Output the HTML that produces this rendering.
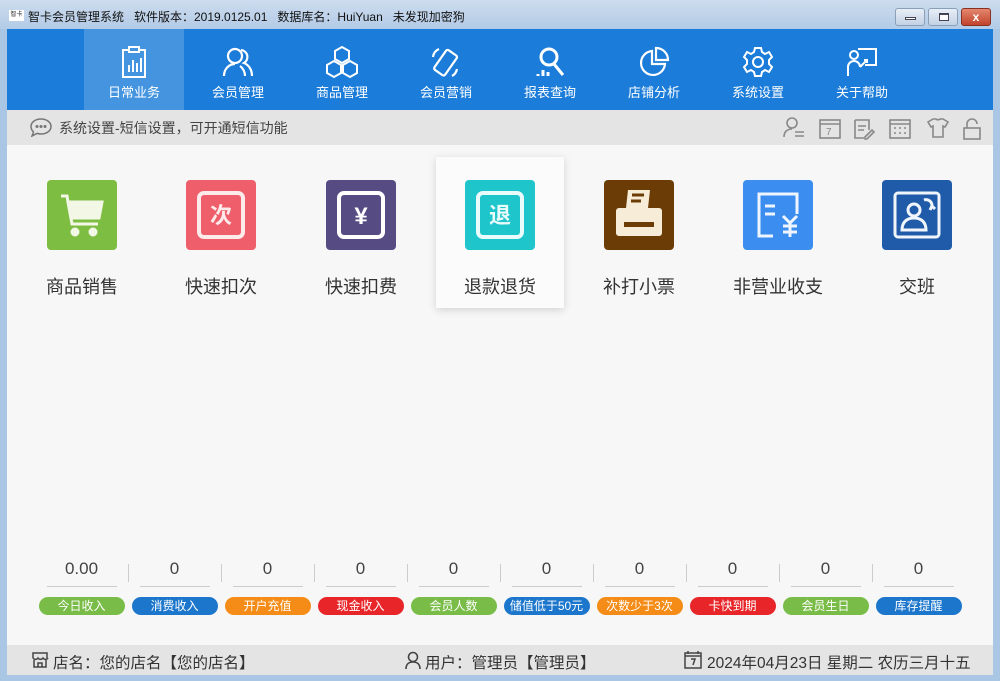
<!DOCTYPE html>
<html><head><meta charset="utf-8"><style>
*{margin:0;padding:0;box-sizing:border-box}
body{width:1000px;height:681px;overflow:hidden;background:#a9c6e4;font-family:"Liberation Sans","Noto Sans CJK SC",sans-serif;position:relative}
.title{position:absolute;left:0;top:0;width:1000px;height:29px;background:linear-gradient(#cddcee,#b3cbe6)}
.title .t{position:absolute;left:28px;top:8px;font-size:12px;color:#111;white-space:pre}
.logo{position:absolute;left:9px;top:10px;width:15px;height:11px;background:#fff;font-size:6px;line-height:11px;text-align:center;color:#333}
.wb{position:absolute;top:8px;height:18px;border:1px solid #8a9fb8;border-radius:3px;background:linear-gradient(#e8eef6,#c3d2e4)}
.nav{position:absolute;left:7px;top:29px;width:986px;height:81px;background:#1b7cd9}
.ni{position:absolute;top:0;width:100px;height:81px;color:#fff;text-align:center;font-size:13px}
.ni svg{position:absolute;left:33px;top:16px}
.ni span{position:absolute;left:0;width:100px;top:53px}
.gbar{position:absolute;left:7px;top:110px;width:986px;height:35px;background:#e4e4e4}
.main{position:absolute;left:7px;top:145px;width:986px;height:500px;background:#f7f7f7}
.tile{position:absolute;top:0;width:128px;text-align:center}
.tile .ic{position:absolute;left:29px;top:35px;width:70px;height:70px;border-radius:4px}
.tile span{position:absolute;left:0;width:128px;top:128px;font-size:18px;color:#333}
.card{position:absolute;left:429px;top:12px;width:128px;height:151px;background:#fbfbfb;box-shadow:0 2px 8px rgba(0,0,0,.15)}
.st{position:absolute;top:413px;width:93px;text-align:center}
.st .v{font-size:17px;color:#444;height:22px;line-height:22px}
.st .ln{margin:6px auto 0;width:70px;border-top:1px solid #ccc}
.st .p{margin:10px auto 0;width:86px;height:18px;border-radius:9px;color:#fff;font-size:12px;line-height:18px}
.sep{position:absolute;top:419px;width:1px;height:18px;background:#ccc}
.sbar{position:absolute;left:7px;top:645px;width:986px;height:30px;background:#e4e4e4;font-size:15.5px;color:#333}
.sbar div{position:absolute;top:6px;white-space:nowrap}
</style></head><body>
<div class="title"><div class="logo">智卡</div><div class="t">智卡会员管理系统   软件版本：2019.0125.01   数据库名：HuiYuan   未发现加密狗</div>
<div class="wb" style="left:895px;width:30px"><div style="position:absolute;left:9px;top:8px;width:11px;height:3px;border:1px solid #445;background:#fff"></div></div>
<div class="wb" style="left:928px;width:30px"><div style="position:absolute;left:10px;top:4px;width:10px;height:8px;border:1px solid #445;border-top-width:2px;background:#fff"></div></div>
<div class="wb" style="left:961px;width:30px;background:linear-gradient(#e5876f,#c0442b);border-color:#8a3020;color:#fff;font-size:12px;text-align:center;line-height:16px;font-weight:bold">x</div>
</div>
<div class="nav">
<div class="ni" style="left:77px;background:#4594e0"><svg width="34" height="34" viewBox="0 0 34 34" fill="none" stroke="#fff" stroke-width="2"><rect x="6" y="5" width="22" height="27"/><rect x="12" y="2" width="10" height="5" fill="#4594e0"/><path d="M12 27V20M16 27V15M20 27V18M24 27V13"/></svg><span>日常业务</span></div>
<div class="ni" style="left:181px"><svg width="34" height="34" viewBox="0 0 34 34" fill="none" stroke="#fff" stroke-width="2.2"><circle cx="14" cy="11" r="7"/><path d="M3 31c0-7 5-12 11-12"/><path d="M20 5a7 7 0 0 1 3 13c5 2 8 7 8 13"/><path d="M24 31c0-4-2-8-5-10"/></svg><span>会员管理</span></div>
<div class="ni" style="left:285px"><svg width="34" height="34" viewBox="0 0 34 34" fill="none" stroke="#fff" stroke-width="2"><path d="M17 2l7 4v8l-7 4-7-4V6z"/><path d="M9 16l7 4v8l-7 4-7-4v-8z"/><path d="M25 16l7 4v8l-7 4-7-4v-8z"/></svg><span>商品管理</span></div>
<div class="ni" style="left:389px"><svg width="34" height="34" viewBox="0 0 34 34" fill="none" stroke="#fff" stroke-width="2.2"><rect x="10" y="6" width="13" height="24" rx="2" transform="rotate(35 17 18)"/><path d="M4 12a10 10 0 0 1 6-8M28 24a10 10 0 0 1-5 7"/></svg><span>会员营销</span></div>
<div class="ni" style="left:493px"><svg width="34" height="34" viewBox="0 0 34 34" fill="none" stroke="#fff" stroke-width="3"><circle cx="16" cy="12" r="8"/><path d="M21 19l9 11M5 31v-2M10 31v-6M15 31v-4" /></svg><span>报表查询</span></div>
<div class="ni" style="left:597px"><svg width="34" height="34" viewBox="0 0 34 34" fill="none" stroke="#fff" stroke-width="2.2"><path d="M15 6a12 12 0 1 0 13 13H15z"/><path d="M19 3a12 12 0 0 1 12 12H19z"/></svg><span>店铺分析</span></div>
<div class="ni" style="left:701px"><svg width="34" height="34" viewBox="0 0 34 34" fill="none" stroke="#fff" stroke-width="2"><circle cx="17" cy="17" r="5"/><path d="M14 3h6l1 4 3 2 4-2 3 5-3 3v4l3 3-3 5-4-2-3 2-1 4h-6l-1-4-3-2-4 2-3-5 3-3v-4l-3-3 3-5 4 2 3-2z"/></svg><span>系统设置</span></div>
<div class="ni" style="left:805px"><svg width="34" height="34" viewBox="0 0 34 34" fill="none" stroke="#fff" stroke-width="2"><circle cx="9" cy="10" r="4"/><path d="M3 31v-9a6 6 0 0 1 12 0M15 22l7-7M19 15h3v3"/><path d="M13 4h18v16H20"/></svg><span>关于帮助</span></div>
</div>
<div class="gbar">
<svg style="position:absolute;left:22px;top:7px" width="24" height="20" viewBox="0 0 24 20" fill="none" stroke="#777" stroke-width="1.5"><path d="M12 2c6 0 10 3.5 10 7.5S18 17 12 17c-1.5 0-3-.3-4-.6L3 19l1.5-4C3 13.5 2 11.5 2 9.5 2 5.5 6 2 12 2z"/><circle cx="8" cy="9.5" r=".8" fill="#777"/><circle cx="12" cy="9.5" r=".8" fill="#777"/><circle cx="16" cy="9.5" r=".8" fill="#777"/></svg>
<div style="position:absolute;left:52px;top:8px;font-size:14px;color:#444">系统设置-短信设置，可开通短信功能</div>
<svg style="position:absolute;left:775px;top:6px" width="200" height="24" viewBox="0 0 200 24" fill="none" stroke="#888" stroke-width="1.6">
<circle cx="10" cy="7" r="5"/><path d="M2 21c0-5 3-8 8-8M13 16h9M13 20h9"/>
<rect x="38" y="4" width="20" height="18"/><path d="M38 8h20"/><text x="44" y="19" font-size="10" fill="#888" stroke="none" font-family="Liberation Sans">7</text>
<path d="M73 4h14v10M73 4v18h9M76 10h8M76 14h6M83 21l7-7 2 2-7 7h-2z"/>
<rect x="108" y="4" width="20" height="18"/><path d="M108 8h20M112 12h2M117 12h2M122 12h2M112 17h2M117 17h2M122 17h2"/>
<path d="M146 6l5-3h3a3 3 0 0 0 4 0h3l5 3-3 5-2-1v11h-10V10l-2 1z"/>
<rect x="182" y="12" width="16" height="11"/><path d="M185 12V8a5 5 0 0 1 10 0"/>
</svg>
</div>
<div class="main">
<div class="card"></div>
<div class="tile" style="left:11px"><div class="ic" style="background:#7dbd42"><svg width="70" height="70" viewBox="0 0 70 70" fill="none" stroke="#f3f7e6" stroke-width="3"><path d="M14 16h6l5 28h26"/><path d="M21 22h34l-3 16H24z" fill="#f3f7e6"/><circle cx="28" cy="52" r="3" fill="#f3f7e6"/><circle cx="46" cy="52" r="3" fill="#f3f7e6"/></svg></div><span>商品销售</span></div>
<div class="tile" style="left:150px"><div class="ic" style="background:#ee5f6b"><svg width="70" height="70" viewBox="0 0 70 70"><rect x="13" y="13" width="44" height="44" rx="5" fill="none" stroke="#fdeaea" stroke-width="4"/><text x="35" y="43" font-size="22" fill="#fdeaea" text-anchor="middle" font-family="Noto Sans CJK SC" font-weight="bold">次</text></svg></div><span>快速扣次</span></div>
<div class="tile" style="left:290px"><div class="ic" style="background:#564b82"><svg width="70" height="70" viewBox="0 0 70 70"><rect x="13" y="13" width="44" height="44" rx="5" fill="none" stroke="#fff" stroke-width="4"/><text x="35" y="44" font-size="24" font-weight="bold" fill="#fff" text-anchor="middle" font-family="Liberation Sans">¥</text></svg></div><span>快速扣费</span></div>
<div class="tile" style="left:429px"><div class="ic" style="background:#1ec6cb"><svg width="70" height="70" viewBox="0 0 70 70"><rect x="13" y="13" width="44" height="44" rx="5" fill="none" stroke="#e9fbfb" stroke-width="4"/><text x="35" y="43" font-size="22" fill="#e9fbfb" text-anchor="middle" font-family="Noto Sans CJK SC" font-weight="bold">退</text></svg></div><span>退款退货</span></div>
<div class="tile" style="left:568px"><div class="ic" style="background:#6c3c06"><svg width="70" height="70" viewBox="0 0 70 70"><path d="M24 10h22l-2 18H22z" fill="#f7ecd8"/><path d="M28 15h12M27 21h10" stroke="#6c3c06" stroke-width="3"/><rect x="12" y="28" width="46" height="28" rx="3" fill="#f7ecd8"/><rect x="20" y="42" width="30" height="5" fill="#6c3c06"/></svg></div><span>补打小票</span></div>
<div class="tile" style="left:707px"><div class="ic" style="background:#3b8ef0"><svg width="70" height="70" viewBox="0 0 70 70" fill="none" stroke="#eef5ff" stroke-width="3"><path d="M30 56H16V14h38v20"/><path d="M22 26h10M22 34h10M40 36l7 7 7-7M47 43v14M40 46h14M40 52h14"/></svg></div><span>非营业收支</span></div>
<div class="tile" style="left:846px"><div class="ic" style="background:#1f5ba9"><svg width="70" height="70" viewBox="0 0 70 70" fill="none" stroke="#f0f5fc" stroke-width="3"><rect x="13" y="13" width="44" height="44" rx="3"/><circle cx="32" cy="30" r="6"/><path d="M20 50c0-8 5-12 12-12s12 4 12 12zM42 20a6 6 0 0 1 8 6M48 30l2-4 3 3"/></svg></div><span>交班</span></div>

<div class="st" style="left:28px"><div class="v">0.00</div><div class="ln"></div><div class="p" style="background:#79bd48">今日收入</div></div>
<div class="st" style="left:121px"><div class="v">0</div><div class="ln"></div><div class="p" style="background:#1b76cc">消费收入</div></div>
<div class="st" style="left:214px"><div class="v">0</div><div class="ln"></div><div class="p" style="background:#f48c17">开户充值</div></div>
<div class="st" style="left:307px"><div class="v">0</div><div class="ln"></div><div class="p" style="background:#e8262a">现金收入</div></div>
<div class="st" style="left:400px"><div class="v">0</div><div class="ln"></div><div class="p" style="background:#79bd48">会员人数</div></div>
<div class="st" style="left:493px"><div class="v">0</div><div class="ln"></div><div class="p" style="background:#1b76cc">储值低于50元</div></div>
<div class="st" style="left:586px"><div class="v">0</div><div class="ln"></div><div class="p" style="background:#f48c17">次数少于3次</div></div>
<div class="st" style="left:679px"><div class="v">0</div><div class="ln"></div><div class="p" style="background:#e8262a">卡快到期</div></div>
<div class="st" style="left:772px"><div class="v">0</div><div class="ln"></div><div class="p" style="background:#79bd48">会员生日</div></div>
<div class="st" style="left:865px"><div class="v">0</div><div class="ln"></div><div class="p" style="background:#1b76cc">库存提醒</div></div>
<div class="sep" style="left:121px"></div><div class="sep" style="left:214px"></div><div class="sep" style="left:307px"></div><div class="sep" style="left:400px"></div><div class="sep" style="left:493px"></div><div class="sep" style="left:586px"></div><div class="sep" style="left:679px"></div><div class="sep" style="left:772px"></div><div class="sep" style="left:865px"></div>
</div>
<div class="sbar">
<svg style="position:absolute;left:23px;top:6px" width="20" height="18" viewBox="0 0 20 18" fill="none" stroke="#444" stroke-width="1.5"><path d="M3 7V2h14v5M3 7a3 3 0 0 0 5 0 3 3 0 0 0 5 0 3 3 0 0 0 5 0M4 9v7h12V9M8 16v-4h4v4"/></svg>
<div style="left:46px">店名：您的店名【您的店名】</div>
<svg style="position:absolute;left:397px;top:6px" width="18" height="18" viewBox="0 0 18 18" fill="none" stroke="#444" stroke-width="1.6"><circle cx="9" cy="6" r="4.5"/><path d="M2 18c0-5 3-7 7-7s7 2 7 7"/></svg>
<div style="left:418px">用户：管理员【管理员】</div>
<svg style="position:absolute;left:677px;top:6px" width="18" height="18" viewBox="0 0 18 18" fill="none" stroke="#444" stroke-width="1.5"><rect x="1" y="2" width="16" height="15"/><path d="M1 5h16M4 0v3M14 0v3M7 8h4l-2 6"/></svg>
<div style="left:700px">2024年04月23日 星期二 农历三月十五</div>
</div>
</body></html>
